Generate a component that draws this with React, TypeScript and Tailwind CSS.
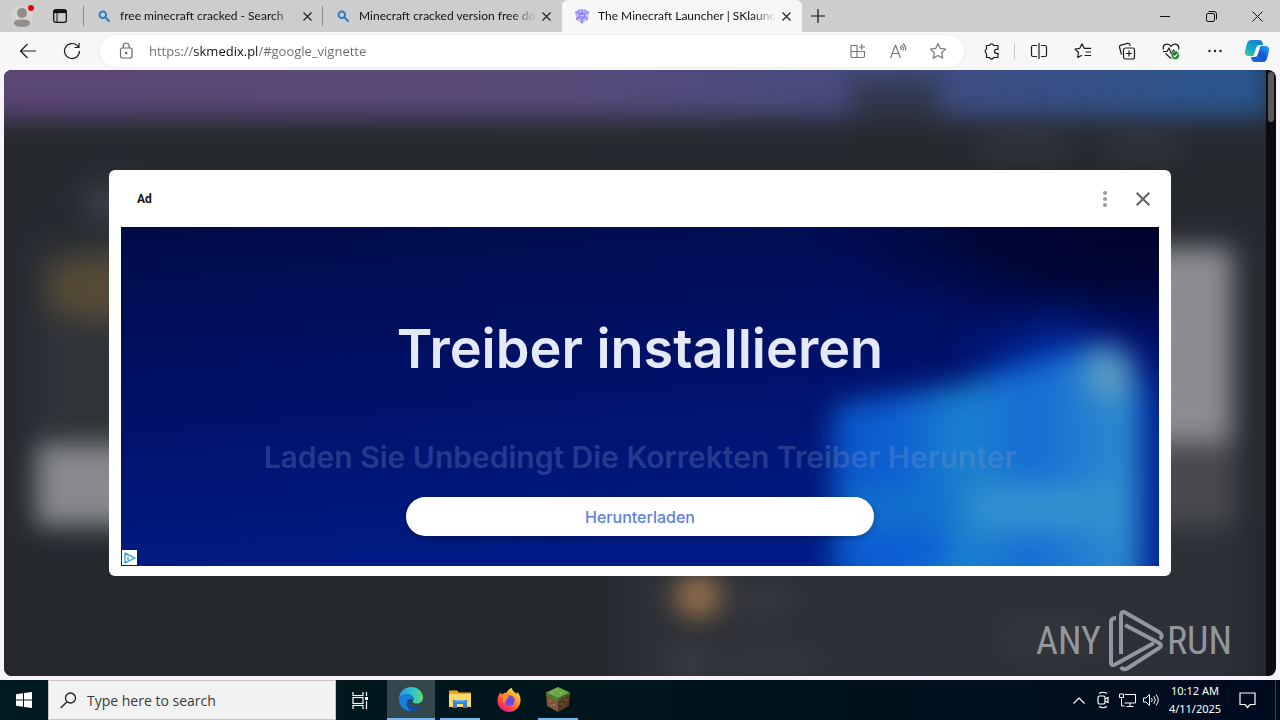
import type { ReactNode } from 'react';

function SearchGlyph() {
  return (
    <svg width="12" height="12" viewBox="0 0 12 12" fill="none" stroke="#2f7fc4" strokeWidth="2">
      <circle cx="4.8" cy="4.8" r="3.3" />
      <path d="M7.3 7.3 11 11" strokeLinecap="round" />
    </svg>
  );
}

function SkGlyph() {
  return (
    <svg width="16" height="16" viewBox="0 0 16 16" fill="none">
      <path d="M8 .8 14.800 3.200 14 11.500 8 15.500 2 11.500 1.200 3.200Z" fill="#c3b8fa" />
      <path d="M8 2v3M3 4l3 2M13 4l-3 2M3 10l3-1M13 10l-3-1M8 11v4" stroke="#8b7bf2" strokeWidth="1.2" />
      <circle cx="8" cy="8" r="2.800" fill="#a99af8" stroke="#7480ea" />
      <g fill="#7d8aee">
        <circle cx="5" cy="2.400" r="1" />
        <circle cx="11" cy="2.400" r="1" />
        <circle cx="2" cy="4.500" r="1" />
        <circle cx="14" cy="4.500" r="1" />
        <circle cx="3" cy="11" r="1" />
        <circle cx="13" cy="11" r="1" />
        <circle cx="8" cy="14.400" r="1" />
      </g>
      <path d="M6.800 7.500h.8M8.800 7.500h.8" stroke="#fff" />
    </svg>
  );
}

function CloseGlyph() {
  return (
    <svg width="9" height="9" viewBox="0 0 9 9" stroke="#222" strokeWidth="1.2">
      <path d="M.5.5l8 8M8.5.5l-8 8" />
    </svg>
  );
}

type TabProps = { title: string; icon: ReactNode; active?: boolean };

function Tab({ title, icon, active }: TabProps) {
  return (
    <div
      className={
        active
          ? 'flex h-8 w-60 items-center rounded-t-md bg-[#f7f7f7] pl-3 pr-[6px]'
          : 'flex h-8 w-[239px] items-center pl-3 pr-[6px]'
      }
    >
      <span className="flex w-4 shrink-0 justify-center">{icon}</span>
      <button
        type="button"
        className="ml-2 min-w-0 flex-1 whitespace-nowrap text-left text-xs text-[#111] [mask-image:linear-gradient(90deg,#000_calc(100%-24px),transparent)]"
      >
        {title}
      </button>
      <button type="button" aria-label={`Close ${title}`} className="flex size-5 shrink-0 items-center justify-center">
        <CloseGlyph />
      </button>
    </div>
  );
}

function TabBar() {
  return (
    <div className="flex h-8 shrink-0 items-center bg-[#cdcdcd] font-['Lato',sans-serif]">
      <button type="button" aria-label="Profile" className="flex w-11 justify-center">
        <svg width="24" height="26" viewBox="0 0 24 26">
          <circle cx="12" cy="14" r="11" fill="#d6d3d0" />
          <circle cx="12" cy="10" r="5" fill="#918d8a" />
          <path d="M4 20c0-3 3.500-3.500 8-3.500s8 .5 8 3.500c0 3-4 4-8 4s-8-1-8-4Z" fill="#918d8a" />
          <circle cx="21" cy="5" r="3" fill="#dc0a12" />
        </svg>
      </button>
      <button type="button" aria-label="Tab actions" className="flex w-8 justify-center">
        <svg width="14" height="14" viewBox="0 0 14 14" fill="none" stroke="#111">
          <rect x=".7" y=".7" width="12.600" height="12.600" rx="2" strokeWidth="1.300" />
          <path d="M1 2.600h12" strokeWidth="3" />
          <path d="M4 3v10" strokeWidth="1" />
        </svg>
      </button>
      <div className="ml-[7px] h-5 w-px bg-[#8a8a8a]" />
      <Tab title="free minecraft cracked - Search" icon={<SearchGlyph />} />
      <div className="-ml-px h-5 w-px bg-[#8a8a8a]" />
      <Tab title="Minecraft cracked version free do" icon={<SearchGlyph />} />
      <Tab title="The Minecraft Launcher | SKlaunc" icon={<SkGlyph />} active />
      <button type="button" aria-label="New tab" className="flex w-8 justify-center">
        <svg width="14" height="14" viewBox="0 0 14 14" stroke="#111" strokeWidth="1.200">
          <path d="M7 0v14M0 7h14" />
        </svg>
      </button>
      <div className="ml-auto flex">
        <button type="button" aria-label="Minimize" className="flex h-8 w-[46px] items-center justify-center">
          <svg width="10" height="10" viewBox="0 0 10 10" stroke="#111">
            <path d="M0 5.500h10" />
          </svg>
        </button>
        <button type="button" aria-label="Restore" className="flex h-8 w-[46px] items-center justify-center">
          <svg width="11" height="11" viewBox="0 0 11 11" fill="none" stroke="#111">
            <rect x=".5" y="2.500" width="8" height="8" rx="1.500" />
            <path d="M2.500 .5h5.500a2.500 2.500 0 0 1 2.500 2.500v5.500" />
          </svg>
        </button>
        <button type="button" aria-label="Close window" className="flex h-8 w-[46px] items-center justify-center">
          <svg width="11" height="11" viewBox="0 0 11 11" stroke="#111">
            <path d="M.5.5l10 10M10.500.5l-10 10" />
          </svg>
        </button>
      </div>
    </div>
  );
}

type ToolProps = { label: string; color?: string; narrow?: boolean; children: ReactNode };

function Tool({ label, color = '#1c1c1c', narrow, children }: ToolProps) {
  return (
    <button
      type="button"
      aria-label={label}
      className={narrow ? 'flex h-8 w-10 shrink-0 items-center justify-center' : 'flex h-8 w-11 shrink-0 items-center justify-center'}
    >
      <svg width="18" height="18" viewBox="0 0 18 18" fill="none" stroke={color} strokeWidth="1.200" strokeLinejoin="round">
        {children}
      </svg>
    </button>
  );
}

function Toolbar() {
  return (
    <div className="flex h-[38px] shrink-0 items-center bg-[#f7f7f7] pl-[6px]">
      <Tool label="Back">
        <path d="M17 9H1.500M8.500 2l-7 7 7 7" />
      </Tool>
      <Tool label="Refresh">
        <path d="M16.500 9a7.500 7.500 0 1 1-2.200-5.300L16 5.500M16 1v4.500h-4.500" />
      </Tool>
      <div className="ml-[6px] flex h-8 min-w-0 flex-1 items-center rounded-full bg-white pl-4 pr-[6px] shadow-[0_0_2px_#e4e4e4]">
        <svg width="20" height="18" viewBox="0 0 20 18" fill="none" stroke="#666" strokeWidth="1.200">
          <rect x="4.500" y="6" width="11.500" height="10" rx="2" />
          <path d="M7.200 6V4a3 3 0 0 1 6 0v2" />
          <circle cx="10.200" cy="11" r=".7" fill="#666" />
        </svg>
        <input
          aria-label="Address"
          defaultValue="https://skmedix.pl/#google_vignette"
          className="ml-[13px] min-w-0 flex-1 bg-[linear-gradient(90deg,#6b6b6b_45px,#111_45px,#111_108px,#6b6b6b_108px)] bg-clip-text pt-px text-[13px] text-transparent outline-none"
        />
        <Tool label="App available" color="#7a7a7a" narrow>
          <path d="M2 3.500h6v12H3.500A1.500 1.500 0 0 1 2 14ZM2 9.500h13.500V14a1.500 1.500 0 0 1-1.500 1.500H8M12.800 2v6M10 5h6" />
        </Tool>
        <Tool label="Read aloud" color="#7a7a7a" narrow>
          <path d="M1.500 16 6.500 3l5 13M3.300 11.500h6.500M11 4.500q1.500 1.500 1.200 3.500M12.500 3q2.400 2.300 2 5.500M14.200 1.500q3 3 2.500 7" />
        </Tool>
        <Tool label="Add to favorites" color="#7a7a7a" narrow>
          <path d="m9 1.500 2.300 4.900 5.300.7-3.900 3.700 1 5.300L9 13.500l-4.700 2.600 1-5.300L1.400 7.100l5.300-.7Z" />
        </Tool>
      </div>
      <div className="ml-[6px] flex items-center">
        <Tool label="Extensions">
          <path d="M3.500 3.500h3a2.200 2.200 0 0 1 4.200 0h4.300v3.800h-1.500a2 2 0 0 0 0 4H15v4.200h-4.300a2.200 2.200 0 0 1-4.200 0h-3v-4.200a2.200 2.200 0 0 1 0-4.100Z" />
        </Tool>
        <div className="h-4 w-px bg-[#c9c9c9]" />
        <div className="ml-[2px] flex">
          <Tool label="Split screen">
            <path d="M7 3.500H3A1.500 1.500 0 0 0 1.500 5v8A1.500 1.500 0 0 0 3 14.500h4M11 3.500h4A1.500 1.500 0 0 1 16.500 5v8a1.500 1.500 0 0 1-1.500 1.500h-4M9 1v16" />
          </Tool>
          <Tool label="Favorites">
            <path d="M10 6 8 1.800 5.800 6.300 1 7l3.500 3.500-.8 5L8 13.200M8 1.800l2.200 4.500h7M11.500 10H17M10.500 13.500H17" />
          </Tool>
          <Tool label="Collections">
            <rect x="5.500" y="6" width="11" height="11" rx="2" />
            <path d="M11 8.500v6M8 11.500h6M3.500 12.500 1.600 5.500a2 2 0 0 1 1.400-2.400L9.500 1.400a2 2 0 0 1 2.400 1.400L12.200 4" />
          </Tool>
          <Tool label="Browser essentials">
            <path d="M1.500 7.500C0 2 6.500.5 9 4.500 11.500.5 18 2 16.500 7.500M1 9.500h4L7 6l2.500 6 2-4 1.200 1.500H15M3.500 11.500 9 16.500" />
            <circle cx="13.300" cy="13.500" r="4" fill="#16831f" stroke="#fff" strokeWidth=".5" />
            <path d="m11.500 13.500 1.300 1.300 2.500-2.700" stroke="#fff" />
          </Tool>
          <Tool label="Settings and more">
            <g fill="#1c1c1c" stroke="none">
              <circle cx="3.500" cy="9" r="1.200" />
              <circle cx="9" cy="9" r="1.200" />
              <circle cx="14.500" cy="9" r="1.200" />
            </g>
          </Tool>
          <button type="button" aria-label="Copilot" className="flex w-[43px] items-center pl-[7px]">
            <svg width="26" height="24" viewBox="0 0 26 24">
              <defs>
                <linearGradient id="copilot-a" x1="0" y1="1" x2=".8" y2="0">
                  <stop offset="0" stopColor="#5bd08c" />
                  <stop offset=".4" stopColor="#14a9c4" />
                  <stop offset="1" stopColor="#1479d4" />
                </linearGradient>
                <linearGradient id="copilot-b" x1="0" y1="1" x2="1" y2="0">
                  <stop offset="0" stopColor="#1672e0" />
                  <stop offset=".5" stopColor="#1553cf" />
                  <stop offset="1" stopColor="#29aef0" />
                </linearGradient>
              </defs>
              <path d="M7 1h8q3 0 3.600 3l.6 2h-3.700q-2.500 0-3.300 2.500L9.500 17H5Q0 17 1 12l2-7.500Q4 1 7 1Z" fill="url(#copilot-a)" />
              <path d="M19 23h-8q-3 0-3.600-3l-.6-2h3.700q2.500 0 3.300-2.500L16.500 7H21q5 0 4 5l-2 7.500Q22 23 19 23Z" fill="url(#copilot-b)" />
            </svg>
          </button>
        </div>
      </div>
    </div>
  );
}

// Blurred launcher page that stays visible behind the dialog
function Backdrop() {
  return (
    <svg className="absolute inset-0 size-full" viewBox="0 0 1262 606" preserveAspectRatio="none" aria-hidden="true">
      <defs>
        <linearGradient id="banner">
          <stop offset="0" stopColor="#5b4676" />
          <stop offset=".45" stopColor="#584b79" />
          <stop offset=".72" stopColor="#424b80" />
          <stop offset="1" stopColor="#28568f" />
        </linearGradient>
        <filter id="soft" x="-60%" y="-60%" width="220%" height="220%" colorInterpolationFilters="sRGB">
          <feGaussianBlur stdDeviation="13" />
        </filter>
      </defs>
      <rect width="1262" height="606" fill="#26292e" />
      <g filter="url(#soft)">
        <rect x="-40" y="-60" width="1306" height="108" fill="url(#banner)" />
        <rect x="846" y="10" width="90" height="40" fill="#30384a" />
        <rect x="976" y="64" width="90" height="24" fill="#33353b" />
        <rect x="1100" y="64" width="76" height="24" fill="#33353b" />
        <rect x="30" y="170" width="110" height="200" fill="#303338" />
        <rect x="80" y="112" width="60" height="42" fill="#3a3d46" />
        <rect x="620" y="170" width="620" height="460" fill="#2d3036" />
        <ellipse cx="96" cy="218" rx="56" ry="34" fill="#544a36" />
        <rect x="32" y="374" width="160" height="82" fill="#888a8f" />
        <rect x="1100" y="178" width="128" height="194" fill="#8b8d92" />
        <rect x="1100" y="372" width="130" height="84" fill="#484a4e" />
        <rect x="670" y="504" width="48" height="44" rx="22" fill="#94704c" />
        <rect x="732" y="520" width="50" height="22" fill="#383b40" />
        <rect x="668" y="582" width="36" height="24" fill="#3c4047" />
        <rect x="720" y="584" width="90" height="20" fill="#34373c" />
        <rect x="1000" y="550" width="90" height="36" fill="#33363c" />
      </g>
    </svg>
  );
}

function WindowsArt() {
  return (
    <svg className="absolute inset-0 size-full" viewBox="0 0 1038 339" preserveAspectRatio="none" aria-hidden="true">
      <defs>
        <linearGradient id="night" x1="0" y1="0" x2=".25" y2="1">
          <stop offset="0" stopColor="#000c48" />
          <stop offset=".55" stopColor="#00116a" />
          <stop offset="1" stopColor="#001c84" />
        </linearGradient>
        <radialGradient id="corner" cx="1" cy="0" r=".36">
          <stop offset="0" stopColor="#00042a" />
          <stop offset=".5" stopColor="#000530" stopOpacity=".8" />
          <stop offset="1" stopColor="#000a50" stopOpacity="0" />
        </radialGradient>
        <linearGradient id="pane-a" x2="1">
          <stop offset="0" stopColor="#0a57c8" />
          <stop offset=".5" stopColor="#0d60d2" />
          <stop offset="1" stopColor="#1a82cc" />
        </linearGradient>
        <linearGradient id="pane-b" x2="1">
          <stop offset="0" stopColor="#1b80cc" />
          <stop offset=".4" stopColor="#156dd4" />
          <stop offset="1" stopColor="#3090cc" />
        </linearGradient>
        <filter id="glow" x="-60%" y="-60%" width="220%" height="220%" colorInterpolationFilters="sRGB">
          <feGaussianBlur stdDeviation="14" />
        </filter>
        <filter id="wide" x="-80%" y="-80%" width="260%" height="260%" colorInterpolationFilters="sRGB">
          <feGaussianBlur stdDeviation="24" />
        </filter>
      </defs>
      <rect width="1038" height="339" fill="url(#night)" />
      <rect width="1038" height="339" fill="url(#corner)" />
      <path d="M860 140 940 96 1040 170V360H860Z" fill="#0030a8" filter="url(#wide)" />
      <g filter="url(#glow)">
        <path d="M712 178 842 158V400H712Z" fill="url(#pane-a)" />
        <path d="M842 158 980 118 1018 156V400H842Z" fill="url(#pane-b)" />
        <ellipse cx="988" cy="146" rx="24" ry="28" fill="#5a9cc4" />
        <rect x="720" y="262" width="110" height="40" fill="#1270cc" />
        <rect x="850" y="256" width="160" height="50" fill="#3190cf" />
        <rect x="736" y="306" width="90" height="30" fill="#0b5ed4" />
      </g>
    </svg>
  );
}

function AdDialog() {
  return (
    <section
      role="dialog"
      aria-label="Ad"
      className="relative flex min-h-0 flex-1 flex-col rounded-md bg-white px-3 pb-[10px]"
    >
      <header className="flex h-[57px] shrink-0 items-center pl-4">
        <span className="font-['Roboto',sans-serif] text-xs font-bold text-[#111]">Ad</span>
        <button type="button" aria-label="Ad options" className="ml-auto flex size-8 items-center justify-center">
          <svg width="4" height="16" viewBox="0 0 4 16" fill="#9a9a9a">
            <circle cx="2" cy="2" r="2" />
            <circle cx="2" cy="8" r="2" />
            <circle cx="2" cy="14" r="2" />
          </svg>
        </button>
        <button type="button" aria-label="Close ad" className="ml-[6px] flex size-8 items-center justify-center">
          <svg width="14" height="14" viewBox="0 0 14 14" stroke="#5f6368" strokeWidth="2">
            <path d="M.7.7l12.600 12.600M13.300.7.7 13.300" />
          </svg>
        </button>
      </header>
      <div className="relative flex min-h-0 flex-1 flex-col items-center overflow-hidden font-['Inter',sans-serif]">
        <WindowsArt />
        <h1 className="relative mt-[88px] text-[54px] font-semibold leading-[68px] text-[#e3e9f6]">Treiber installieren</h1>
        <p className="relative mt-[54px] text-[30px] font-semibold leading-10 text-[#8296d2]/30">
          Laden Sie Unbedingt Die Korrekten Treiber Herunter
        </p>
        <button
          type="button"
          className="relative mt-5 h-[39px] w-[468px] rounded-full bg-white text-base font-medium text-[#5f7fe0] shadow-[0_2px_6px_rgba(0,0,0,0.3)]"
        >
          Herunterladen
        </button>
        <button type="button" aria-label="AdChoices" className="absolute bottom-px left-px flex size-[15px] items-center justify-center bg-white">
          <svg width="12" height="12" viewBox="0 0 12 12" fill="none" stroke="#1ea0d8" strokeWidth="1.300">
            <path d="M1 1.200 11 6 1 10.800Z" strokeLinejoin="round" />
            <path d="M4 5v3M4 3.500v.8" />
          </svg>
        </button>
      </div>
    </section>
  );
}

function Watermark() {
  return (
    <div className="absolute bottom-1 right-[34px] flex h-[62px] items-center font-['Liberation_Sans_Narrow','Roboto_Condensed','Roboto',sans-serif] text-[38px] leading-none text-[#93969a]">
      <span>ANY</span>
      <svg className="ml-2 mr-[2px]" width="56" height="62" viewBox="0 0 56 62" fill="none" stroke="#93969a" strokeWidth="4">
        <path d="M7 8Q2 8 2 12V52Q2 57 7 54L45 33" />
        <path d="M12 44V6Q12 0 17 3L50 22Q55 25 51 29" />
        <path d="M16 15 50 33Q54 35.500 50 38L19 58Q14 61 12 57" />
      </svg>
      <span>RUN</span>
    </div>
  );
}

function Page() {
  return (
    <main className="mx-1 mb-1 flex min-h-0 flex-1 overflow-hidden rounded-lg bg-[#0b0c10]">
      <div className="relative flex min-w-0 flex-1 flex-col py-[100px] pl-[105px] pr-[95px]">
        <Backdrop />
        <AdDialog />
        <Watermark />
      </div>
      <div className="w-[10px] shrink-0 px-[2px] pt-[2px]">
        <div className="h-[50px] rounded-full bg-[#5a5a5a]" />
      </div>
    </main>
  );
}

function EdgeLogo() {
  return (
    <svg width="26" height="26" viewBox="0 0 26 26">
      <defs>
        <linearGradient id="edge-top" x1="0" x2="1">
          <stop offset="0" stopColor="#1d9fe0" />
          <stop offset=".6" stopColor="#33c6c8" />
          <stop offset="1" stopColor="#5fdc6c" />
        </linearGradient>
      </defs>
      <path d="M1 12C2 4.500 7.500 1 13 1c7 0 12 5 12 10.500 0 4-3 6-6.500 6-3 0-4.500-1.200-3.500-2.500 1.500-2 .5-6-4-6-4 0-8 1-10 3Z" fill="url(#edge-top)" />
      <path d="M1 12c2-3.500 5-4.500 9-4 4 .5 6 4 5 6.500-1-1.500-3-2-4.500-1-2.500 2-1 9 5.500 9 3 0 5-1 7-2.500C21 23.500 17.500 25 13 25 5 25 .5 19 1 12Z" fill="#1580d8" />
      <path d="M10.500 13.500c-3 2-3 7.500 2.500 11.500 4 0 8-1.500 10-5-6 3-12 1-12.500-6.500Z" fill="#124fa3" />
    </svg>
  );
}

function FolderLogo() {
  return (
    <svg width="22" height="20" viewBox="0 0 22 20">
      <path d="M0 1.500h8l2 2h12V18H0Z" fill="#e9a921" />
      <path d="M0 5h22v13H0Z" fill="#ffd768" />
      <path d="M4 19v-8h14v8h-4v-4H8v4Z" fill="#2f8bd0" />
      <path d="M6 11h10v1.500H6Z" fill="#68b5ea" />
    </svg>
  );
}

function FirefoxLogo() {
  return (
    <svg width="24" height="24" viewBox="0 0 24 24">
      <defs>
        <linearGradient id="fox" x1=".9" y1="0" x2=".2" y2="1">
          <stop offset="0" stopColor="#fff04a" />
          <stop offset=".4" stopColor="#ff9a25" />
          <stop offset=".75" stopColor="#ff3d4d" />
          <stop offset="1" stopColor="#d6128e" />
        </linearGradient>
      </defs>
      <path d="M3.500 4.500 5 6.500C7 5 8 4.500 9.500 5c1-3 3-4.500 5.500-5 0 3 3 4 4.500 6 .5-.5.4-1.500.2-2.200C22.500 6 23.800 9 23.500 13c-.5 6-5 11-11.500 11S.5 19 .5 13c0-3.500 1-6.500 3-8.500Z" fill="url(#fox)" />
      <circle cx="12.500" cy="12.500" r="5.200" fill="#7143e0" />
      <path d="M6 8c3-1 5 0 6.500 1.500-1.500 0-3 1-2.500 2.500-2 0-2.500 2-1.500 3.500C6 15 5 11 6 8Z" fill="#ff8a2b" />
    </svg>
  );
}

function BlockLogo() {
  return (
    <svg width="24" height="25" viewBox="0 0 24 25">
      <path d="M12 0 24 5.500 12 11.500 0 5.500Z" fill="#6aa544" />
      <path d="M0 5.500 12 11.500V25L1 19Z" fill="#7d5538" />
      <path d="M24 5.500 12 11.500V25l11-6Z" fill="#563724" />
      <path d="M0 5.500 12 11.500v3l-3-.5-2-2.500-2 1L3 9 0 9Z" fill="#4b7d30" />
      <path d="M24 5.500 12 11.500v2.500l3-1 2-2.500 2 1 2-3h3Z" fill="#3a6426" />
      <path d="M3 13h2v2H3ZM7 17h2v2H7ZM4 18h2v1H4Z" fill="#a8785a" />
      <path d="M15 16h2v2h-2ZM19 12h2v2h-2ZM18 18h2v1h-2Z" fill="#7b5238" />
      <path d="M10 2l2 1-2 1-2-1ZM15 5l2 1-2 1-2-1ZM6 5l2 1-2 1-2-1Z" fill="#86c25e" />
    </svg>
  );
}

type AppButtonProps = { label: string; open?: boolean; active?: boolean; children: ReactNode };

function AppButton({ label, open, active, children }: AppButtonProps) {
  return (
    <button
      type="button"
      aria-label={label}
      className={active ? 'flex h-10 w-12 flex-col items-center bg-[#34474d]' : 'flex h-10 w-12 flex-col items-center'}
    >
      <span className="flex flex-1 items-center">{children}</span>
      {active && <span className="h-[2px] w-full bg-[#76b9ed]" />}
      {open && <span className="h-[2px] w-10 bg-[#76b9ed]" />}
    </button>
  );
}

function Taskbar() {
  return (
    <footer className="flex h-10 shrink-0 items-center bg-linear-to-r from-[#001a21] via-[#00151c] to-[#000b1d]">
      <button type="button" aria-label="Start" className="flex w-12 justify-center">
        <svg width="16" height="16" viewBox="0 0 16 16" fill="#fff">
          <path d="M0 2.200 7 1.200v6.300H0ZM8 1 16 0v7.500H8ZM0 8.500h7v6.300l-7-1ZM8 8.500h8V16l-8-1Z" />
        </svg>
      </button>
      <label className="flex h-full w-72 items-center border border-[#c4c4c4] bg-[#f2f2f2] pl-[11px]">
        <svg width="17" height="17" viewBox="0 0 17 17" fill="none" stroke="#222" strokeWidth="1.300">
          <circle cx="10.500" cy="6" r="5" />
          <path d="M7 9.700.7 16" />
        </svg>
        <input
          aria-label="Search"
          placeholder="Type here to search"
          className="ml-[10px] min-w-0 flex-1 bg-transparent pt-px text-sm outline-none placeholder:text-[#3a3a3a]"
        />
      </label>
      <button type="button" aria-label="Task view" className="mr-[3px] flex w-12 justify-center">
        <svg width="17" height="17" viewBox="0 0 17 17" fill="none" stroke="#fff" strokeWidth="1.200">
          <path d="M1 0v3.500h10V0M1 17v-3.500h10V17M14.500 0v4M14.500 9v8" />
          <rect x="1" y="5.500" width="10" height="6" />
          <path d="M13 6.500h3" strokeWidth="3" />
        </svg>
      </button>
      <AppButton label="Microsoft Edge" active>
        <EdgeLogo />
      </AppButton>
      <div className="ml-px flex gap-px">
        <AppButton label="File Explorer" open>
          <FolderLogo />
        </AppButton>
        <AppButton label="Firefox">
          <FirefoxLogo />
        </AppButton>
        <AppButton label="Minecraft Launcher" open>
          <BlockLogo />
        </AppButton>
      </div>
      <div className="ml-auto flex h-full items-center text-white">
        <button type="button" aria-label="Show hidden icons" className="flex w-6 justify-center">
          <svg width="12" height="7" viewBox="0 0 12 7" fill="none" stroke="#fff" strokeWidth="1.200">
            <path d="m.5 6.500 5.500-5.500 5.500 5.500" />
          </svg>
        </button>
        <button type="button" aria-label="Meet now" className="flex w-6 justify-center">
          <svg width="14" height="18" viewBox="0 0 14 18" fill="none" stroke="#fff" strokeWidth="1.200">
            <rect x="2" y="5" width="7" height="8" rx="1.500" />
            <path d="M9 8l3-1.500v5L9 10M3 2.500q4-2.500 8 0M3 15.500q4 2.500 8 0" />
          </svg>
        </button>
        <button type="button" aria-label="Network" className="flex w-6 justify-center">
          <svg width="17" height="14" viewBox="0 0 17 14" fill="none" stroke="#fff">
            <path d="M6 1.500h10.500v8.500H5.500M11 10v3M7.500 13.500h7M2.500 5.500v7.500h3" />
            <path d="M.5 1h4v3.500h-4Z" />
          </svg>
        </button>
        <button type="button" aria-label="Volume" className="flex w-6 justify-center">
          <svg width="17" height="14" viewBox="0 0 17 14" fill="none" stroke="#fff">
            <path d="M.5 5h2.500l3.500-3.500v11L3 9H.5ZM8.500 5q1.500 2 0 4M10.800 3.200q3 3.800 0 7.600M13 1.500q4.500 5.500 0 11" />
          </svg>
        </button>
        <time className="w-16 whitespace-nowrap text-center font-['Noto_Sans',sans-serif] text-[11px] leading-[18px]">
          <span className="block">10:12 AM</span>
          <span className="block">4/11/2025</span>
        </time>
        <button type="button" aria-label="Notifications" className="flex w-10 justify-center">
          <svg width="17" height="17" viewBox="0 0 17 17" fill="none" stroke="#fff" strokeWidth="1.200">
            <path d="M1 1h15v11.500h-5L8.500 15.500 6 12.500H1Z" />
          </svg>
        </button>
        <div className="ml-2 mr-1 h-full w-px bg-[#3b4450]" />
      </div>
    </footer>
  );
}

function App() {
  return (
    <div className="flex h-screen flex-col overflow-hidden bg-[#f7f3f9] font-['Open_Sans','Noto_Sans',sans-serif]">
      <TabBar />
      <Toolbar />
      <Page />
      <Taskbar />
    </div>
  );
}

export default App;
